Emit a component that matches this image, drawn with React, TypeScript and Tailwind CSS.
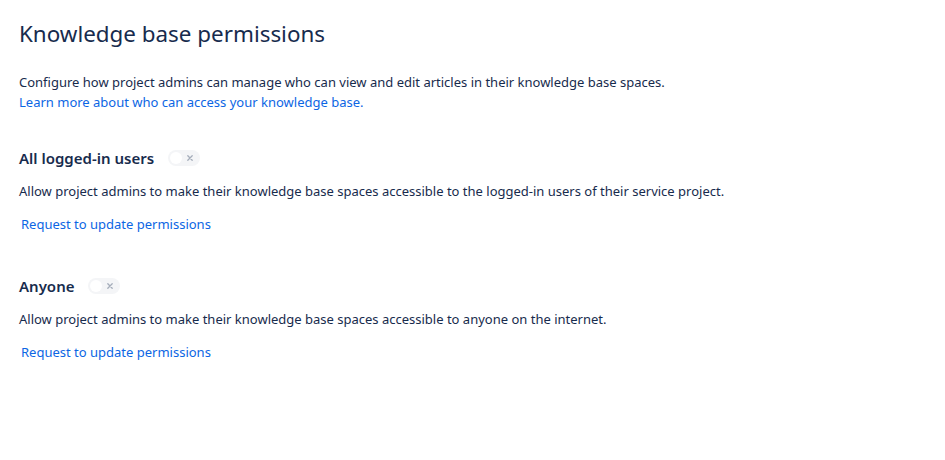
import React from "react";

const Toggle = () => (
  <span className="inline-flex items-center w-[32px] h-[16px] rounded-full bg-[#f4f5f7] px-[2px] relative">
    <span className="w-[12px] h-[12px] rounded-full bg-white" />
    <svg className="absolute right-[6px] top-[4px]" width="8" height="8" viewBox="0 0 8 8">
      <path d="M1.8 1.8 L6.2 6.2 M6.2 1.8 L1.8 6.2" stroke="#a5adba" strokeWidth="1.3" strokeLinecap="round" />
    </svg>
  </span>
);

const Section = ({ title, text }: { title: string; text: string }) => (
  <div className="flex flex-col">
    <div className="flex items-center gap-[14px] h-[24px] pt-[2px]">
      <h2 className="text-[15px] font-semibold text-[#172b4d]">{title}</h2>
      <Toggle />
    </div>
    <p className="mt-[12px] text-[13px] leading-[20px] text-[#172b4d]">{text}</p>
    <a className="mt-[13px] ml-[2px] text-[13px] leading-[20px] text-[#0c66e4]">
      Request to update permissions
    </a>
  </div>
);

export default function App() {
  return (
    <div
      className="w-[945px] h-[460px] bg-white px-[19px] pt-[19px]"
      style={{ fontFamily: '"Noto Sans", "Open Sans", sans-serif' }}
    >
      <h1 className="text-[22.4px] leading-[30px] font-normal text-[#172b4d]">
        Knowledge base permissions
      </h1>
      <p className="mt-[23px] text-[13px] leading-[20px] text-[#172b4d]">
        Configure how project admins can manage who can view and edit articles in their knowledge base spaces.
        <br />
        <a className="text-[#0c66e4]">Learn more about who can access your knowledge base.</a>
      </p>
      <div className="mt-[33px] flex flex-col gap-[39px]">
        <Section
          title="All logged-in users"
          text="Allow project admins to make their knowledge base spaces accessible to the logged-in users of their service project."
        />
        <Section
          title="Anyone"
          text="Allow project admins to make their knowledge base spaces accessible to anyone on the internet."
        />
      </div>
    </div>
  );
}
